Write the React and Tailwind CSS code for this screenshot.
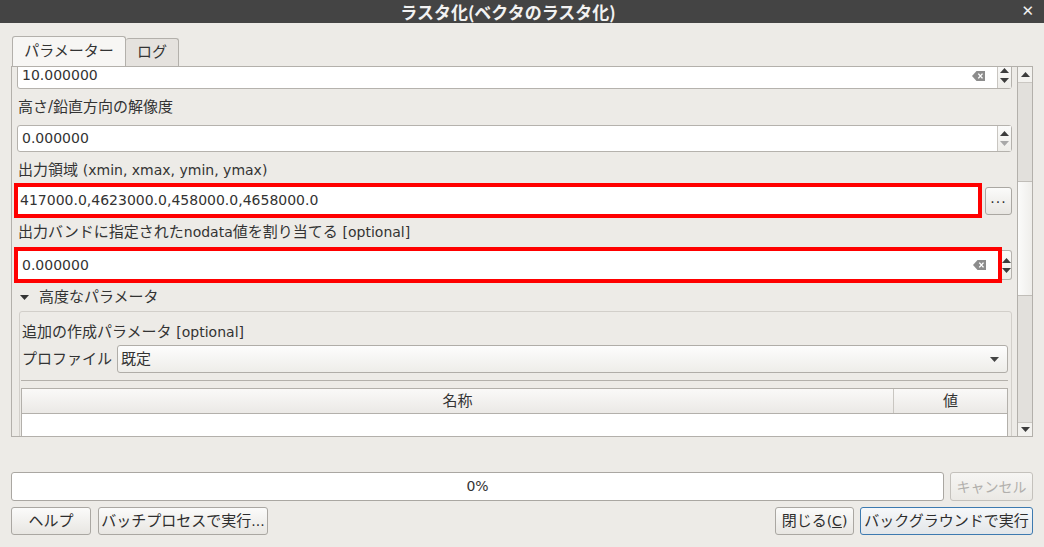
import React from 'react';

const ClearIcon = () => (
  <svg width="13" height="10" viewBox="0 0 13 10" className="shrink-0">
    <polygon points="0,5 4.5,0 13,0 13,10 4.5,10" fill="#8c8c8c" />
    <path d="M6.3 2.6 L10.5 7.4 M10.5 2.6 L6.3 7.4" stroke="#ffffff" strokeWidth="1.4" />
  </svg>
);

const Tri = ({ up, color = '#3c3c3c' }) => (
  <svg width="9" height="5" viewBox="0 0 9 5">
    <polygon points={up ? '0,5 4.5,0 9,5' : '0,0 9,0 4.5,5'} fill={color} />
  </svg>
);

// latin runs are a touch smaller than the japanese ones
const L = ({ children }) => <span className="text-[14px]">{children}</span>;

const SpinCol = ({ downColor, className = '' }) => (
  <div className={`flex flex-col items-center justify-center gap-[5px] bg-gradient-to-b from-[#fbfbfa] to-[#eeede9] ${className}`}>
    <Tri up />
    <Tri color={downColor} />
  </div>
);

// base button: size, padding and text size come from the caller
const Btn = ({ children, className = '' }) => (
  <button className={`rounded-[3px] border bg-gradient-to-b leading-none whitespace-nowrap flex items-center justify-center ${className}`}>
    {children}
  </button>
);

const plain = 'border-[#aaa7a2] from-[#fbfbfa] to-[#e8e6e2] text-[#2e2e2e]';

const Label = ({ children, className = '' }) => (
  <div className={`h-[20px] leading-[20px] text-[#333] pl-px whitespace-nowrap ${className}`}>{children}</div>
);

export default function App() {
  return (
    <div
      className="w-[1044px] h-[547px] bg-[#edebe7] flex flex-col overflow-hidden text-[15px] text-[#333]"
      style={{ fontFamily: '"DejaVu Sans", "Noto Sans CJK JP", sans-serif' }}
    >
      {/* title bar */}
      <div className="h-[23px] bg-[#444444] flex items-center relative shrink-0">
        <div
          className="flex-1 pr-[28px] text-center text-[#f2f2f2] font-bold text-[17px] leading-none"
          style={{ fontFamily: '"Noto Sans CJK JP", sans-serif' }}
        >
          ラスタ化(ベクタのラスタ化)
        </div>
        <div className="absolute right-[10px] top-[4px] text-[#f0f0f0] font-bold text-[15px] leading-none">✕</div>
      </div>

      {/* tabs */}
      <div className="flex items-end pl-[12px] mt-[13px] h-[30px] shrink-0">
        <div className="h-[30px] w-[114px] rounded-t-[3px] border border-b-0 border-[#b3b0ab] bg-[#f7f6f4] flex items-center justify-center">
          パラメーター
        </div>
        <div className="h-[28px] w-[53px] rounded-t-[3px] border border-b-0 border-l-0 border-[#b3b0ab] bg-[#e5e2de] flex items-center justify-center">
          ログ
        </div>
      </div>

      {/* scroll area */}
      <div className="ml-[11px] w-[1022px] h-[371px] border border-[#b3b0ab] flex shrink-0 overflow-hidden">
        <div className="flex-1 overflow-hidden">
          <div className="flex flex-col pl-[5px] pr-[5px] -mt-[5px]">
            {/* input 1 */}
            <div className="h-[27px] flex border border-[#b5b2ad] rounded-[3px] bg-white text-[14px]">
              <div className="flex-1 flex items-center pl-[4px] pr-[12px]">
                <span className="flex-1">10.000000</span>
                <ClearIcon />
              </div>
              <SpinCol className="w-[14px] border-l border-[#c9c6c1]" />
            </div>

            <Label className="mt-[8px]">高さ/鉛直方向の解像度</Label>

            <div className="mt-[8px] h-[27px] flex border border-[#b5b2ad] rounded-[3px] bg-white text-[14px]">
              <div className="flex-1 flex items-center pl-[4px]">0.000000</div>
              <SpinCol downColor="#a8a8a8" className="w-[14px] border-l border-[#c9c6c1]" />
            </div>

            <Label className="mt-[8px]">出力領域 <L>(xmin, xmax, ymin, ymax)</L></Label>

            <div className="mt-[3px] h-[35px] flex items-center -ml-[3px] text-[14px]">
              <div className="flex-1 h-[35px] border-[4px] border-[#ff0000] bg-white flex items-center pl-[2px]">
                417000.0,4623000.0,458000.0,4658000.0
              </div>
              <Btn className={`${plain} ml-[3px] w-[27px] h-[28px] text-[14px] tracking-[1px] pb-[6px]`}>...</Btn>
            </div>

            <Label className="mt-[4px]">出力バンドに指定された<L>nodata</L>値を割り当てる <L>[optional]</L></Label>

            <div className="mt-[5px] h-[36px] flex items-center -ml-[3px] text-[14px]">
              <div className="flex-1 h-[36px] border-[4px] border-[#ff0000] bg-white flex items-center pl-[4px] pr-[12px]">
                <span className="flex-1">0.000000</span>
                <ClearIcon />
              </div>
              <SpinCol className="w-[10px] h-[30px] border border-l-0 border-[#b5b2ad] rounded-r-[3px]" />
            </div>

            <div className="mt-[4px] h-[20px] flex items-center gap-[10px] pl-[3px]">
              <Tri color="#333" />
              <span className="leading-[20px]">高度なパラメータ</span>
            </div>

            {/* group */}
            <div className="mt-[4px] ml-[2px] h-[160px] border border-[#d2cfca] rounded-[3px] pl-[1px] pr-[3px] flex flex-col">
              <Label className="mt-[10px]">追加の作成パラメータ <L>[optional]</L></Label>
              <div className="mt-[3px] flex items-center">
                <span className="pl-[1px] w-[96px] whitespace-nowrap">プロファイル</span>
                <div className="flex-1 h-[28px] border border-[#b0ada8] rounded-[3px] bg-gradient-to-b from-[#fdfdfd] to-[#eeede9] flex items-center pl-[3px] pr-[8px]">
                  <span className="flex-1">既定</span>
                  <Tri color="#444" />
                </div>
              </div>
              <div className="mt-[7px] h-[2px] border-t border-[#b3b0ab] bg-[#fbfaf9]" />
              <div className="mt-[7px] border border-[#b3b0ab] bg-white flex flex-col">
                <div className="h-[25px] flex border-b border-[#b3b0ab] bg-gradient-to-b from-[#faf9f8] to-[#ebe9e6]">
                  <div className="flex-1 flex items-center justify-center border-r border-[#c9c6c1]">名称</div>
                  <div className="w-[113px] flex items-center justify-center">値</div>
                </div>
                <div className="h-[60px]" />
              </div>
            </div>
          </div>
        </div>

        {/* scrollbar */}
        <div className="w-[15px] border-l border-[#b3b0ab] flex flex-col">
          <div className="h-[15px] flex items-center justify-center bg-[#f3f2ef]"><Tri up /></div>
          <div className="h-[99px] bg-[#e2e0dc] border-t border-[#cac7c2]" />
          <div className="h-[115px] bg-gradient-to-r from-[#fbfbfa] to-[#efeeeb] border-y border-[#c0bdb8]" />
          <div className="flex-1 bg-[#e2e0dc]" />
          <div className="h-[14px] flex items-center justify-center bg-[#f3f2ef] border-t border-[#cac7c2]"><Tri /></div>
        </div>
      </div>

      {/* progress */}
      <div className="mt-[35px] px-[11px] flex gap-[6px] h-[29px]">
        <div className="flex-1 border border-[#aaa7a2] rounded-[3px] bg-white flex items-center justify-center text-[14px]">0%</div>
        <Btn className="border-[#c4c1bc] from-[#f6f5f3] to-[#ebe9e5] text-[#b1afac] w-[83px] h-[29px] text-[14px]">キャンセル</Btn>
      </div>

      {/* buttons */}
      <div className="mt-[6px] px-[11px] flex items-center">
        <Btn className={`${plain} w-[80px] h-[28px] text-[15px]`}>ヘルプ</Btn>
        <Btn className={`${plain} ml-[7px] w-[170px] h-[28px] text-[15px]`}>バッチプロセスで実行<L>...</L></Btn>
        <div className="flex-1" />
        <Btn className={`${plain} w-[79px] h-[28px] text-[15px]`}>閉じる<L>(<span className="underline">C</span>)</L></Btn>
        <Btn className="ml-[6px] w-[173px] h-[28px] text-[15px] border-[#3d7ab0] from-[#f6f8fa] to-[#e3e6e9] text-[#2e2e2e]">バックグラウンドで実行</Btn>
      </div>
    </div>
  );
}
